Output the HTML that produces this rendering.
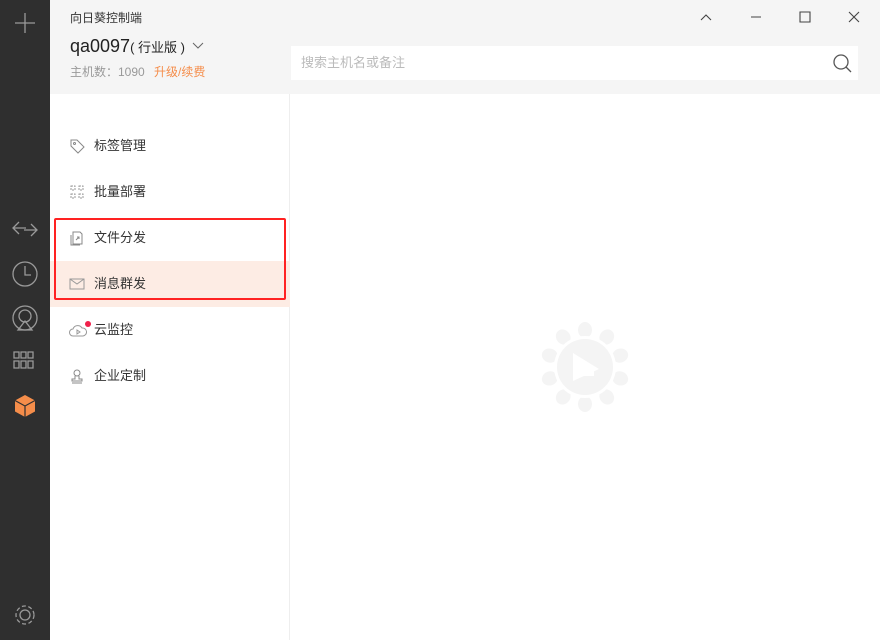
<!DOCTYPE html><html><head><meta charset="utf-8"><style>
*{margin:0;padding:0;box-sizing:border-box}
body{width:880px;height:640px;overflow:hidden;position:relative;font-family:"Liberation Sans","Noto Sans CJK SC",sans-serif;background:#fff}
.side{position:absolute;left:0;top:0;width:50px;height:640px;background:#2f2f2f}
.hdr{position:absolute;left:50px;top:0;width:830px;height:94px;background:#f5f5f5}
.t{position:absolute;font-size:12px;color:#333}
.menu{position:absolute;left:50px;top:94px;width:240px;height:546px;background:#fff;border-right:1px solid #eee}
.item{position:absolute;left:0;width:240px;height:46px;font-size:13px;color:#333;line-height:46px;padding-left:44px}
.item svg{position:absolute;left:19px;top:15px}
</style></head><body>
<div class="side">
<svg width="50" height="640" style="position:absolute;left:0;top:0" fill="none" stroke="#9a9a9a" stroke-width="1.3">
<path d="M25 13v20M15 23h20"/>
<path d="M19 222l-6 6 6 6M14 228h12M31 224l6 6-6 6M36 230H24"/>
<circle cx="25" cy="274" r="12"/><path d="M25 266v9h6"/>
<circle cx="25" cy="318" r="12"/><circle cx="25" cy="316" r="6"/><path d="M18 330l7-9 7 9z"/>
<path d="M14 352h5v6h-5zM21 352h5v6h-5zM28 352h5v6h-5zM14 361h5v7h-5zM21 361h5v7h-5zM28 361h5v7h-5z"/>
<circle cx="25" cy="615" r="5"/><circle cx="25" cy="615" r="9" stroke-dasharray="4 2.5"/>
</svg>
<svg width="24" height="24" style="position:absolute;left:13px;top:394px"><path d="M12 1l10 5.5v11L12 23 2 17.5v-11z" fill="#f58d4a"/><path d="M2 6.5L12 12l10-5.5M12 12v11" stroke="#2f2f2f" stroke-width="1.2" fill="none"/></svg>
</div>
<div class="hdr">
<div class="t" style="left:20px;top:9px">向日葵控制端</div>
<div class="t" style="left:20px;top:36px;font-size:18px;color:#222">qa0097<span style="font-size:13px">( 行业版 )</span></div>
<svg width="12" height="8" style="position:absolute;left:142px;top:42px"><path d="M1 1l5 5 5-5" stroke="#666" fill="none"/></svg>
<div class="t" style="left:20px;top:63px;color:#999">主机数：1090 <span style="color:#f58d4a;margin-left:6px">升级/续费</span></div>
<svg width="180" height="30" style="position:absolute;left:645px;top:5px" fill="none" stroke="#444" stroke-width="1.1"><path d="M6 15l5-5 5 5M56 12h10M105 7h10v10h-10zM154 7l10 10M164 7l-10 10"/></svg>
<div style="position:absolute;left:241px;top:46px;width:567px;height:34px;background:#fff;font-size:13px;color:#bbb;line-height:34px;padding-left:10px">搜索主机名或备注</div>
<svg width="20" height="20" style="position:absolute;left:782px;top:53px" fill="none" stroke="#555" stroke-width="1.3"><circle cx="9" cy="9" r="7"/><path d="M14 14l5 5"/></svg>
</div>
<div class="menu">
<div class="item" style="top:29px"><svg width="16" height="16" fill="none" stroke="#888"><path d="M2 2h6l7 7-6 6-7-7z"/><circle cx="5.5" cy="5.5" r="1"/></svg>标签管理</div>
<div class="item" style="top:75px"><svg width="16" height="16" fill="none" stroke="#999"><path d="M2 2h4v4H2zM10 2h4v4h-4zM2 10h4v4H2zM10 10h4v4h-4z" stroke-dasharray="2 1"/></svg>批量部署</div>
<div class="item" style="top:121px"><svg width="16" height="16" fill="none" stroke="#888"><path d="M4 2h7l2 2v10H4zM2 5v10h9M7 10l3-3M8 7h2v2"/></svg>文件分发</div>
<div class="item" style="top:167px;background:#fdece4"><svg width="18" height="16" fill="none" stroke="#999"><path d="M1 3h14v10H1zM1 3l7 5 7-5"/></svg>消息群发</div>
<div class="item" style="top:213px"><svg width="18" height="16" fill="none" stroke="#999"><path d="M4 14a3 3 0 010-7 5 5 0 019-1 4 4 0 011 8z"/><path d="M8 8v4l3-2z"/></svg><span style="position:absolute;left:35px;top:14px;width:6px;height:6px;border-radius:3px;background:#f0204a"></span>云监控</div>
<div class="item" style="top:259px"><svg width="16" height="16" fill="none" stroke="#888"><circle cx="8" cy="5" r="3"/><path d="M6 8v3H3v2h10v-2h-3V8M3 15h10"/></svg>企业定制</div>
<div style="position:absolute;left:4px;top:124px;width:232px;height:82px;border:2px solid #f22;border-radius:2px"></div>
</div>
<svg width="100" height="100" style="position:absolute;left:535px;top:317px" fill="#f4f4f4">
<g transform="translate(50,50)">
<ellipse cx="0" cy="-37" rx="7" ry="8"/>
<ellipse cx="0" cy="-37" rx="7" ry="8" transform="rotate(36)"/>
<ellipse cx="0" cy="-37" rx="7" ry="8" transform="rotate(72)"/>
<ellipse cx="0" cy="-37" rx="7" ry="8" transform="rotate(108)"/>
<ellipse cx="0" cy="-37" rx="7" ry="8" transform="rotate(144)"/>
<ellipse cx="0" cy="-37" rx="7" ry="8" transform="rotate(180)"/>
<ellipse cx="0" cy="-37" rx="7" ry="8" transform="rotate(216)"/>
<ellipse cx="0" cy="-37" rx="7" ry="8" transform="rotate(252)"/>
<ellipse cx="0" cy="-37" rx="7" ry="8" transform="rotate(288)"/>
<ellipse cx="0" cy="-37" rx="7" ry="8" transform="rotate(324)"/>
<circle r="31" fill="#fff"/>
<circle r="28"/>
<path d="M-12-14L14 2-12 14z M-6 9L9 0v9z" fill="#fff"/>
</g></svg>
</body></html>
